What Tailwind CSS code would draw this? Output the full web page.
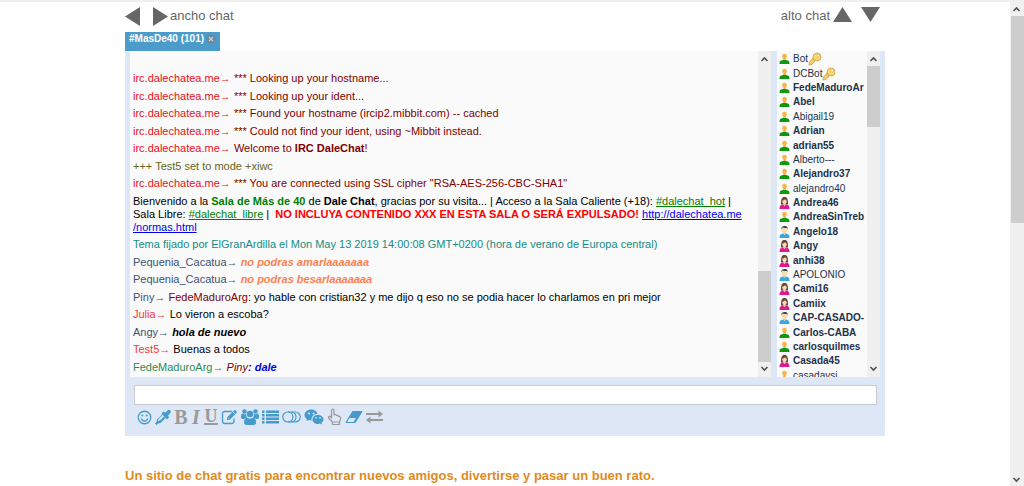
<!DOCTYPE html>
<html lang="es">
<head>
<meta charset="utf-8">
<meta name="viewport" content="width=device-width, initial-scale=1">
<title>Dale Chat</title>
<script src="https://cdn.jsdelivr.net/npm/@tailwindcss/browser@4"></script>
</head>
<body class="flex h-screen overflow-hidden bg-white font-['Liberation_Sans',Arial,sans-serif]">
<svg class="hidden" aria-hidden="true">
  <symbol id="guest" viewBox="0 0 22 22"><circle cx="11" cy="5.500" r="4.800" fill="#fbb44c"/><path d="M8.500 9h5v4h-5z" fill="#f5ad4a"/><path d="M1 21c0-6 2-7 7-8h6c5 1 7 2 7 8z" fill="#0c9a0c"/></symbol>
  <symbol id="woman" viewBox="0 0 22 24"><path d="M4 15C4 4 5 0 11 0s7 4 7 15z" fill="#6b4636"/><path d="M8.500 10h5v7h-5z" fill="#f0c8a0"/><ellipse cx="11" cy="8" rx="4.500" ry="5.500" fill="#fbdcbc"/><path d="M6 7c3 0 5-1 6-3 1 2 2 3 4 3 0-4-2-6-5-6S6 3 6 7z" fill="#6b4636"/><path d="M1 24c0-6 2-8 7-9l3 3 3-3c5 1 7 3 7 9z" fill="#dd1a92"/></symbol>
  <symbol id="man" viewBox="0 0 22 24"><path d="M8.500 11h5v6h-5z" fill="#e8c492"/><ellipse cx="11" cy="8" rx="5.500" ry="6" fill="#f8dcae"/><path d="M5 7C4 1 8 0 12 0c5 0 6 4 5 7l-1-3c-3 0-6 0-9-1z" fill="#35424a"/><path d="M1 24c0-6 2-8 7-9l3 3 3-3c5 1 7 3 7 9z" fill="#3ba7e0"/></symbol>
  <symbol id="key" viewBox="0 0 28 28"><path d="M12 10 3 20l-1 6 6-1 1-3 3-1 1-3 6-3z" fill="#f6cf61" stroke="#cf9a35" stroke-width="1.500"/><circle cx="18" cy="10" r="8" fill="#f9d872" stroke="#cf9a35" stroke-width="1.500"/><circle cx="20.500" cy="7.500" r="2.500" fill="#fff" stroke="#cf9a35"/></symbol>
  <symbol id="up" viewBox="0 0 13 13"><path d="m3.500 8 3-3 3 3" fill="none" stroke="#505050" stroke-width="1.600"/></symbol>
  <symbol id="down" viewBox="0 0 13 13"><path d="m3.500 5 3 3 3-3" fill="none" stroke="#505050" stroke-width="1.600"/></symbol>
</svg>

<main class="min-w-0 flex-1 border-t-2 border-[#f0f0f0]">
  <div class="mx-auto w-full max-w-[760px]">
    <div class="flex h-[30px] items-center justify-between pb-[2px] text-[13px] text-[#666]">
      <div class="flex items-center">
        <button aria-label="Menos ancho"><svg class="h-[19px] w-[15px]" viewBox="0 0 15 19"><path d="M0 9.500 15 0v19z" fill="#666"/></svg></button>
        <button aria-label="Más ancho" class="ml-[13px] mr-[2px]"><svg class="h-[19px] w-[15px]" viewBox="0 0 15 19"><path d="M15 9.500 0 0v19z" fill="#666"/></svg></button>
        <span>ancho chat</span>
      </div>
      <div class="mr-[5px] flex items-center">
        <span>alto chat</span>
        <button aria-label="Menos alto" class="ml-[3px] mr-[9px]"><svg class="mb-[3px] h-[15px] w-[19px]" viewBox="0 0 19 15"><path d="M9.500 0 19 15H0z" fill="#666"/></svg></button>
        <button aria-label="Más alto"><svg class="mb-[3px] h-[15px] w-[19px]" viewBox="0 0 19 15"><path d="M9.500 15 19 0H0z" fill="#666"/></svg></button>
      </div>
    </div>
    <div class="flex h-[19px] items-start">
      <button class="flex h-full gap-[2px] bg-[#4b9cca] px-1 pt-px text-[10px] font-bold leading-3 text-white">#MasDe40 (101)
        <svg class="mt-px size-[10px]" viewBox="0 0 20 20"><circle cx="10" cy="10" r="9" fill="#6f8797"/><path d="m6 6 8 8m0-8-8 8" stroke="#bfd3df" stroke-width="2.500"/></svg>
      </button>
    </div>

    <section class="bg-[#dee7f5] pb-[11px]">
      <div class="flex h-[326px] gap-[6px] px-[5px]">
        <div class="flex min-w-0 flex-1 bg-[#fafafa]">
          <div class="flex min-w-0 flex-1 flex-col justify-between pb-[3px] pl-[3px] pt-[21px] text-[11px] leading-[13px] text-black">
            <p class="text-[#800000]"><span class="text-[#e81123]">irc.dalechatea.me→</span> *** Looking up your hostname...</p>
            <p class="text-[#800000]"><span class="text-[#e81123]">irc.dalechatea.me→</span> *** Looking up your ident...</p>
            <p class="text-[#800000]"><span class="text-[#e81123]">irc.dalechatea.me→</span> *** Found your hostname (ircip2.mibbit.com) -- cached</p>
            <p class="text-[#800000]"><span class="text-[#e81123]">irc.dalechatea.me→</span> *** Could not find your ident, using ~Mibbit instead.</p>
            <p class="text-[#800000]"><span class="text-[#e81123]">irc.dalechatea.me→</span> Welcome to <b>IRC DaleChat</b>!</p>
            <p class="text-[#666622]">+++ Test5 set to mode +xiwc</p>
            <p class="text-[#800000]"><span class="text-[#e81123]">irc.dalechatea.me→</span> *** You are connected using SSL cipher "RSA-AES-256-CBC-SHA1"</p>
            <p>Bienvenido a la <b class="text-[#008000]">Sala de Más de 40</b> de <b>Dale Chat</b>, gracias por su visita... | Acceso a la Sala Caliente (+18): <a href="#hot" class="text-[#008000] underline">#dalechat_hot</a> |<br>Sala Libre: <a href="#libre" class="text-[#008000] underline">#dalechat_libre</a> |&nbsp; <b class="text-[#ff0000]">NO INCLUYA CONTENIDO XXX EN ESTA SALA O SERÁ EXPULSADO!</b> <a href="#normas" class="text-[#0000ee] underline">http://dalechatea.me<br>/normas.html</a></p>
            <p class="text-[#148c84]">Tema fijado por ElGranArdilla el Mon May 13 2019 14:00:08 GMT+0200 (hora de verano de Europa central)</p>
            <p class="text-[#3d5273]">Pequenia_Cacatua→ <b class="italic text-[#ff7f50]">no podras amarlaaaaaaa</b></p>
            <p class="text-[#3d5273]">Pequenia_Cacatua→ <b class="italic text-[#ff7f50]">no podras besarlaaaaaaa</b></p>
            <p><span class="text-[#3d5273]">Piny→</span> <span class="text-[#800000]">FedeMaduroArg</span>: yo hable con cristian32 y me dijo q eso no se podia hacer lo charlamos en pri mejor</p>
            <p><span class="text-[#f04040]">Julia→</span> Lo vieron a escoba?</p>
            <p><span class="text-[#3d5273]">Angy→</span> <b class="italic">hola de nuevo</b></p>
            <p><span class="text-[#f04040]">Test5→</span> Buenas a todos</p>
            <p class="text-[#2e8b50]">FedeMaduroArg→ <i class="text-[#800000]">Piny</i><b class="italic text-[#0000e6]">: dale</b></p>
          </div>
          <div class="flex w-[13px] flex-col bg-[#f0f0f0] py-[2px]">
            <svg class="size-[13px]"><use href="#up"/></svg>
            <div class="flex flex-1 flex-col justify-end"><div class="h-[91px] bg-[#cdcdcd]"></div></div>
            <svg class="size-[13px]"><use href="#down"/></svg>
          </div>
        </div>

        <div class="flex w-[103px] overflow-hidden bg-[#fafafa]">
          <ul id="users" class="grid h-[332px] min-w-0 flex-1 auto-rows-fr overflow-hidden pl-[2px] pt-px text-[10px] text-[#22324c]"></ul>
          <div class="flex w-[13px] flex-col bg-[#f0f0f0] py-[2px]">
            <svg class="size-[13px] shrink-0"><use href="#up"/></svg>
            <div class="flex-1"><div class="h-[61px] bg-[#cdcdcd]"></div></div>
            <svg class="size-[13px] shrink-0"><use href="#down"/></svg>
          </div>
        </div>
      </div>

      <div class="pl-[9px] pr-2 pt-2">
        <input type="text" aria-label="Mensaje" class="block h-5 w-full border border-[#c6cbd6] bg-white px-1 text-[11px] outline-none">
      </div>

      <div class="flex h-5 items-end gap-[3px] pl-3 text-[#459bcb]">
        <button aria-label="Emoticonos"><svg class="size-[15px]" viewBox="0 0 30 30" fill="none" stroke="currentColor" stroke-width="2.600"><circle cx="15" cy="15" r="12.500"/><path d="M9 18c2 6 10 6 12 0" stroke-linecap="round"/><circle cx="10.500" cy="11" r="2" fill="currentColor" stroke="none"/><circle cx="19.500" cy="11" r="2" fill="currentColor" stroke="none"/></svg></button>
        <button aria-label="Color"><svg class="size-4" viewBox="0 0 32 32" fill="currentColor"><path d="m17 5 4 2 4-4c4-4 9 2 5 6l-4 4 2 4-4 4L13 9z"/><path d="M14 11 4 21l-1 5-3 3 3 3 3-3 5-1 10-10-3-3-8 8-4 1 1-4 8-8z"/></svg></button>
        <button aria-label="Negrita" class="w-[14px] text-center font-['Liberation_Serif',serif] text-[20px] font-bold leading-4 text-[#999]">B</button>
        <button aria-label="Cursiva" class="w-[10px] text-center font-['Liberation_Serif',serif] text-[20px] font-bold italic leading-4 text-[#999]">I</button>
        <button aria-label="Subrayado" class="flex h-4 w-[14px] justify-center border-b-2 border-[#999] font-['Liberation_Serif',serif] text-[18px] font-bold leading-[14px] text-[#999]">U</button>
        <button aria-label="Editar"><svg class="h-4 w-[17px]" viewBox="0 0 32 32" fill="none" stroke="currentColor" stroke-width="2.600"><path d="M21 5H7c-4 0-5 2-5 5v14c0 3 1 5 5 5h13c4 0 5-2 5-5v-5"/><path d="m11 17 14-14c3-2 7 2 5 5L16 22h-5z" fill="currentColor" stroke="none"/><path d="m13 17.500 3 3M23 6l4 4" stroke="#dee7f5" stroke-width="1.500"/></svg></button>
        <button aria-label="Usuarios"><svg class="h-4 w-[18px]" viewBox="0 0 36 32" fill="currentColor"><circle cx="7" cy="5" r="4.500"/><circle cx="29" cy="5" r="4.500"/><circle cx="18" cy="10" r="6.500"/><path d="M0 17c0-5 1-8 3-8 3 2 5 2 7 1 0 4 1 6 3 8-3-1-5 0-7 2-3 0-6 0-6-3zM36 17c0-5-1-8-3-8-3 2-5 2-7 1 0 4-1 6-3 8 3-1 5 0 7 2 3 0 6 0 6-3zM6 27c0-6 2-10 6-10 4 3 8 3 12 0 4 0 6 4 6 10 0 3-2 5-5 5H11c-3 0-5-2-5-5z"/></svg></button>
        <button aria-label="Lista"><svg class="mb-px h-[14px] w-[17px]" viewBox="0 0 34 28" fill="currentColor"><path d="M0 1h5v5H0zm8 0h26v5H8zM0 8h5v5H0zm8 0h26v5H8zM0 15h5v5H0zm8 0h26v5H8zM0 22h5v5H0zm8 0h26v5H8z"/></svg></button>
        <button aria-label="Alternar"><svg class="mb-[2px] h-3 w-[19px]" viewBox="0 0 38 24" fill="none" stroke="currentColor" stroke-width="2.400"><rect x="1.500" y="2" width="35" height="20" rx="10"/><path d="M12 2c13 0 13 20 0 20M19 2c12 2 12 18 0 20"/></svg></button>
        <button aria-label="Privados"><svg class="h-4 w-5" viewBox="0 0 38 32" fill="currentColor"><path d="M13 1C6 1 0 6 0 12c0 4 2 6 5 8l-1 4 5-2 5 1c-1-8 5-13 12-13C25 5 20 1 13 1zm-4 6a2 2 0 1 1 0 4 2 2 0 0 1 0-4zm9 0a2 2 0 1 1 0 4 2 2 0 0 1 0-4z" fill-rule="evenodd"/><path d="M27 12c-6 0-11 4-11 9s5 9 11 9l4-1 4 2-1-4c2-1 4-3 4-6 0-5-5-9-11-9zm-4 4a1.700 1.700 0 1 1 0 3.400 1.700 1.700 0 0 1 0-3.400zm8 0a1.700 1.700 0 1 1 0 3.400 1.700 1.700 0 0 1 0-3.400z" fill-rule="evenodd"/></svg></button>
        <button aria-label="Toque" class="text-[#999]"><svg class="h-[17px] w-[15px]" viewBox="0 0 28 34" fill="none" stroke="currentColor" stroke-width="2.400" stroke-linejoin="round"><path d="M8 20V5c0-4 5-4 5 0v9c2-2 4-1 5 1 2-1 4 0 4 2 3-1 5 1 4 5l-2 6v5H10v-5l-7-7c-3-3 1-6 3-4zM10 28h14"/></svg></button>
        <button aria-label="Borrar"><svg class="mb-px h-[14px] w-[18px]" viewBox="0 0 36 28"><path d="M15 2h18c2 0 2 1 1 3L22 24c-1 2-2 2-3 2H3c-2 0-2-1-1-3z" fill="currentColor"/><path d="m9 16-5 8h13l5-8z" fill="#dee7f5"/></svg></button>
        <button aria-label="Cambiar" class="text-[#999]"><svg class="mb-px h-[14px] w-[17px]" viewBox="0 0 34 28" fill="currentColor"><path d="M0 6h25V1l9 7-9 7v-5H0zM34 18H9v-5l-9 7 9 7v-5h25z"/></svg></button>
      </div>
    </section>

    <h1 class="mt-8 text-[13px] font-bold leading-4 text-[#e08a1e]">Un sitio de chat gratis para encontrar nuevos amigos, divertirse y pasar un buen rato.</h1>
  </div>
</main>

<div class="flex w-[14px] shrink-0 flex-col bg-[#f0f0f0] pt-[3px]">
  <svg class="size-[13px]"><use href="#up"/></svg>
  <div class="flex-1 pl-px"><div class="h-[207px] bg-[#cdcdcd]"></div></div>
  <svg class="size-[13px]"><use href="#down"/></svg>
</div>

<script>
const users = [
  ["Bot", "guest", 0, 1], ["DCBot", "guest", 0, 1], ["FedeMaduroAr", "guest", 1], ["Abel", "guest", 1],
  ["Abigail19", "guest", 0], ["Adrian", "guest", 1], ["adrian55", "guest", 1], ["Alberto---", "guest", 0],
  ["Alejandro37", "guest", 1], ["alejandro40", "guest", 0], ["Andrea46", "woman", 1], ["AndreaSinTreb", "guest", 1],
  ["Angelo18", "man", 1], ["Angy", "woman", 1], ["anhi38", "woman", 1], ["APOLONIO", "man", 0],
  ["Cami16", "woman", 1], ["Camiix", "woman", 1], ["CAP-CASADO-", "man", 1], ["Carlos-CABA", "guest", 1],
  ["carlosquilmes", "guest", 1], ["Casada45", "woman", 1], ["casadaysi", "guest", 0]
];
document.getElementById("users").innerHTML = users.map(([name, icon, bold, key]) =>
  `<li class="flex min-h-0 items-center gap-[3px] leading-3"><svg class="h-3 w-[11px] shrink-0"><use href="#${icon}"/></svg><span class="flex items-center whitespace-nowrap ${bold ? "font-bold" : "font-normal"}">${name}${key ? '<svg class="size-[14px] shrink-0"><use href="#key"/></svg>' : ""}</span></li>`).join("");
</script>
</body>
</html>
